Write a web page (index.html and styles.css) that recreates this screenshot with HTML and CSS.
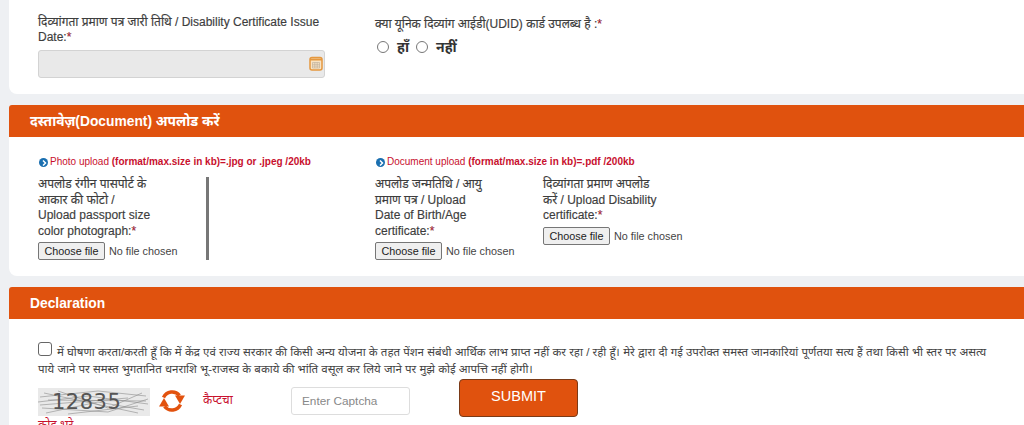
FILE: index.html
```html
<!DOCTYPE html>
<html lang="hi">
<head>
<meta charset="utf-8">
<title>Form</title>
<link rel="stylesheet" href="styles.css">
</head>
<body>
<main class="page">
  <section class="card card-top">
    <div class="date-col">
      <label class="lbl">दिव्यांगता प्रमाण पत्र जारी तिथि / Disability Certificate Issue<br>Date:<span class="req">*</span></label>
      <div class="date-input">
        <svg class="cal" width="14" height="15" viewBox="0 0 14 15"><rect x="1" y="1.500" width="12" height="12.500" rx="2" fill="#f8e3c4" stroke="#e5983f" stroke-width="1.500"/><path d="M1 3.500h12" stroke="#e5983f" stroke-width="2"/><path d="M3.500 6.500h7v5.500h-7zM3.500 8.300h7M3.500 10.100h7M5.800 6.500v5.500M8.200 6.500v5.500" fill="none" stroke="#b9ab98" stroke-width=".6"/></svg>
      </div>
    </div>
    <div class="udid-col">
      <label class="lbl lbl-udid">क्या यूनिक दिव्यांग आईडी(UDID) कार्ड उपलब्ध है :<span class="req">*</span></label>
      <div class="radios">
        <span class="radio"></span><span class="radio-text">हाँ</span>
        <span class="radio"></span><span class="radio-text">नहीं</span>
      </div>
    </div>
  </section>

  <h2 class="bar bar-doc">दस्तावेज़(Document) अपलोड करें</h2>
  <section class="card card-doc">
    <div class="doc-group doc-photo">
      <p class="note"><span class="dot"><svg width="8" height="8" viewBox="0 0 8 8"><path d="M3 1.500 5.500 4 3 6.500" fill="none" stroke="#fff" stroke-width="1.500"/></svg></span>Photo upload <b>(format/max.size in kb)=.jpg or .jpeg /20kb</b></p>
      <div class="photo-field">
        <div class="field f-photo">
          <label class="lbl lbl-up">अपलोड रंगीन पासपोर्ट के<br>आकार की फोटो /<br>Upload passport size<br>color photograph:<span class="req">*</span></label>
          <div class="file"><span class="file-btn">Choose file</span><span class="file-none">No file chosen</span></div>
        </div>
      </div>
    </div>
    <div class="doc-group doc-other">
      <p class="note"><span class="dot"><svg width="8" height="8" viewBox="0 0 8 8"><path d="M3 1.500 5.500 4 3 6.500" fill="none" stroke="#fff" stroke-width="1.500"/></svg></span>Document upload <b>(format/max.size in kb)=.pdf /200kb</b></p>
      <div class="other-fields">
        <div class="field f-dob">
          <label class="lbl lbl-up">अपलोड जन्मतिथि / आयु<br>प्रमाण पत्र / Upload<br>Date of Birth/Age<br>certificate:<span class="req">*</span></label>
          <div class="file"><span class="file-btn">Choose file</span><span class="file-none">No file chosen</span></div>
        </div>
        <div class="field f-dis">
          <label class="lbl lbl-up">दिव्यांगता प्रमाण अपलोड<br>करें / Upload Disability<br>certificate:<span class="req">*</span></label>
          <div class="file"><span class="file-btn">Choose file</span><span class="file-none">No file chosen</span></div>
        </div>
      </div>
    </div>
  </section>

  <h2 class="bar bar-decl">Declaration</h2>
  <section class="card card-decl">
    <p class="decl"><span class="check"></span>में घोषणा करता/करती हूँ कि में केंद्र एवं राज्य सरकार की किसी अन्य योजना के तहत पेंशन संबंधी आर्थिक लाभ प्राप्त नहीं कर रहा / रही हूँ। मेरे द्वारा दी गई उपरोक्त समस्त जानकारियां पूर्णतया सत्य हैं तथा किसी भी स्तर पर असत्य<br>पाये जाने पर समस्त भुगतानित धनराशि भू-राजस्व के बकाये की भांति वसूल कर लिये जाने पर मुझे कोई आपत्ति नहीं होगी।</p>
    <div class="captcha-row">
      <div class="captcha-img">
        <svg class="noise" width="112" height="28" viewBox="0 0 112 28"><path d="M2 9 60 3 108 8M0 14 50 8 110 16M4 20 70 24 110 11M8 25 60 14 106 22M20 3 70 20 104 5M2 17 90 10M30 26 100 18M6 5 100 25M10 12 108 13" fill="none" stroke="#8b8b8b" stroke-width=".6"/></svg>
        <span class="captcha-num">12835</span>
      </div>
      <svg class="refresh" width="26" height="26" viewBox="0 0 26 26"><path d="M4.500 9.500A9.500 9.500 0 0 1 20.500 7.500" fill="none" stroke="#e2520e" stroke-width="3.400"/><path d="M16 7.500h10l-5 8.500z" fill="#e2520e"/><path d="M21.500 16.500A9.500 9.500 0 0 1 5.500 18.500" fill="none" stroke="#e2520e" stroke-width="3.400"/><path d="M0 18.500h10l-5-8.500z" fill="#e2520e"/></svg>
      <label class="captcha-lbl">कैप्टचा</label>
      <span class="captcha-input">Enter Captcha</span>
      <button class="submit" type="button">SUBMIT</button>
    </div>
    <label class="captcha-lbl2">कोड भरे</label>
  </section>
</main>
</body>
</html>
```
FILE: styles.css
```css
* { box-sizing: border-box; }
html, body { margin: 0; height: 425px; overflow: hidden; }
body {
  background: #eef0f3;
  font-family: "Liberation Sans", "Noto Sans", sans-serif;
  color: #444;
}
.page { padding-left: 9px; }
.card { background: #fff; }
.card-top {
  height: 94px;
  display: flex;
  padding: 15px 0 0 29px;
  border-radius: 0 0 0 8px;
}
.date-col { width: 287px; margin-right: 50px; flex: none; }
.lbl {
  display: block;
  font-size: 12px;
  line-height: 14.500px;
  color: #3d3d3d;
  -webkit-text-stroke: .15px #3d3d3d;
  white-space: nowrap;
}
.req { color: #c8102e; }
.date-input {
  position: relative;
  height: 28px;
  margin-top: 6px;
  background: #e9e9e9;
  border: 1px solid #d3d3d3;
  border-radius: 3px;
}
.cal { position: absolute; right: 1px; top: 5px; }
.lbl-udid { margin-top: 2px; }
.radios { display: flex; align-items: center; height: 22px; margin-top: 4px; }
.radio {
  width: 12px; height: 12px;
  margin: 0 2px 0 2px;
  border: 1px solid #777;
  border-radius: 50%;
}
.radio-text { font-size: 14px; font-weight: 700; color: #333; margin: 0 5px 0 6px; }
.bar {
  margin: 0;
  height: 32px;
  padding: 0 21px;
  background: #e0520e;
  color: #fff;
  font-size: 13.800px;
  line-height: 34px;
  font-weight: 700;
  border-radius: 3px 0 0 0;
}
.bar-doc { margin-top: 11px; }
.bar-decl { margin-top: 11px; }
.card-doc {
  height: 139px;
  display: flex;
  padding: 18px 0 0 29px;
  border-radius: 0 0 0 8px;
}
.doc-photo { width: 337px; flex: none; }
.note { margin: 0; font-size: 10px; line-height: 14px; color: #c8102e; display: flex; align-items: center; white-space: pre; height: 14px; }
.note b { font-weight: 700; }
.dot {
  display: inline-flex; align-items: center; justify-content: center;
  width: 9px; height: 9px; margin: 1px 2px 0 1px;
  background: #1a6fb0; border-radius: 50%;
}
.photo-field { margin-top: 8px; width: 171px; height: 83px; border-right: 3px solid #777; }
.other-fields { margin-top: 8px; display: flex; }
.f-photo { width: 135px; }
.f-dob { width: 168px; flex: none; }
.f-dis { width: 150px; flex: none; }
.lbl-up { line-height: 15.700px; }
.file { display: flex; align-items: center; margin-top: 2px; white-space: nowrap; }
.f-dis .file { margin-top: 3px; }
.file-btn {
  flex: none;
  width: 67px; height: 18px;
  background: #efefef;
  border: 1px solid #767676;
  border-radius: 2px;
  font-size: 10.800px; line-height: 16px; text-align: center;
  color: #222;
}
.file-none { margin-left: 4px; font-size: 10.800px; color: #444; }
.card-decl { height: 106px; padding: 23px 0 0 29px; overflow: hidden; }
.decl { margin: 0; white-space: nowrap; font-size: 11.500px; line-height: 17px; color: #444; }
.check {
  display: inline-block;
  width: 14px; height: 14px;
  margin-right: 5px;
  border: 1px solid #666;
  border-radius: 3px;
  vertical-align: 0;
}
.captcha-row { display: flex; align-items: flex-start; margin-top: 1px; height: 38px; }
.captcha-img {
  position: relative;
  flex: none;
  width: 112px; height: 28px;
  margin-top: 9px;
  padding-left: 14px;
  background: #e9e9e9;
}
.noise { position: absolute; left: 0; top: 0; }
.captcha-num {
  position: relative;
  font-family: "DejaVu Sans", sans-serif;
  font-size: 21px; line-height: 28px; letter-spacing: .5px; color: #555;
}
.refresh { flex: none; margin: 9px 0 0 9px; }
.captcha-lbl { flex: none; width: 70px; margin: 9px 0 0 18px; font-size: 12px; line-height: 24px; color: #c8102e; }
.captcha-lbl2 { display: block; margin-top: 1px; font-size: 12px; line-height: 15px; color: #c8102e; }
.captcha-input {
  flex: none;
  width: 119px; height: 28px;
  margin-top: 8px; margin-left: 18px;
  padding-left: 10px;
  border: 1px solid #ddd;
  border-radius: 3px;
  font-size: 11.800px; line-height: 26px; color: #888;
}
.submit {
  flex: none;
  width: 119px; height: 38px;
  margin-left: 49px;
  background: #e0520e;
  border: 1px solid #7a3a17;
  border-radius: 4px;
  color: #fff;
  font: 14.500px/30px "Liberation Sans", sans-serif;
  padding: 0 0 4px;
}
```
